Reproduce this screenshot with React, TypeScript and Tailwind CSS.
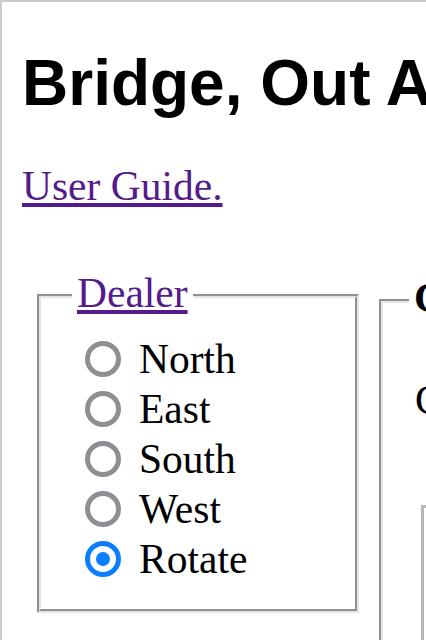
const dealers = ["North", "East", "South", "West", "Rotate"];

function Radio({ checked }: { checked: boolean }) {
  if (checked) {
    return (
      <span className="w-[36px] h-[36px] rounded-full border-[5px] border-[#0b7dff] flex items-center justify-center flex-none">
        <span className="w-[14px] h-[14px] rounded-full bg-[#0b7dff]" />
      </span>
    );
  }
  return <span className="w-[36px] h-[36px] rounded-full border-[5px] border-[#8e8e93] bg-white flex-none" />;
}

export default function App() {
  return (
    <div className="w-[426px] h-[640px] overflow-hidden bg-white border-t-2 border-l-2 border-[#cbcbcb] pl-[20px] pt-[49px] text-black font-['Liberation_Serif',serif]">
      <h1 className="text-[64px] leading-none font-bold whitespace-nowrap font-['Liberation_Sans',Arial,sans-serif]">
        Bridge, Out And About
      </h1>
      <p className="mt-[51px] text-[41.5px] leading-none whitespace-nowrap">
        <a href="#" className="text-[#551a8b] underline">
          User Guide.
        </a>
      </p>

      <div className="flex items-start gap-[20px] mt-[65px] w-max">
        <fieldset className="ml-[15px] w-[322px] flex-none border-4 [border-style:groove] border-[#e4e4e4] px-0 pt-[14px] pb-[25px]">
          <legend className="ml-[31px] px-[5px] pb-[6px] text-[41.5px] leading-none">
            <a href="#" className="text-[#551a8b] underline">
              Dealer
            </a>
          </legend>
          <div className="pl-[44px] flex flex-col">
            {dealers.map((d) => (
              <label key={d} className="h-[50px] flex items-center gap-[18px] text-[41.5px] leading-[50px]">
                <Radio checked={d === "Rotate"} />
                <span>{d}</span>
              </label>
            ))}
          </div>
        </fieldset>

        <fieldset className="mt-[5px] w-[300px] h-[400px] flex-none border-4 [border-style:groove] border-[#e4e4e4] px-0 pt-[14px]">
          <legend className="ml-[26px] px-[5px] pb-[6px] text-[41.5px] leading-none font-bold whitespace-nowrap">
            Contract
          </legend>
          <p className="mt-[41px] pl-[32px] text-[41.5px] leading-none whitespace-nowrap">Contract:</p>
          <div className="mt-[83px] ml-[38px] w-[200px] h-[200px] border-[3px] border-[#b8b8b8]" />
        </fieldset>
      </div>
    </div>
  );
}
